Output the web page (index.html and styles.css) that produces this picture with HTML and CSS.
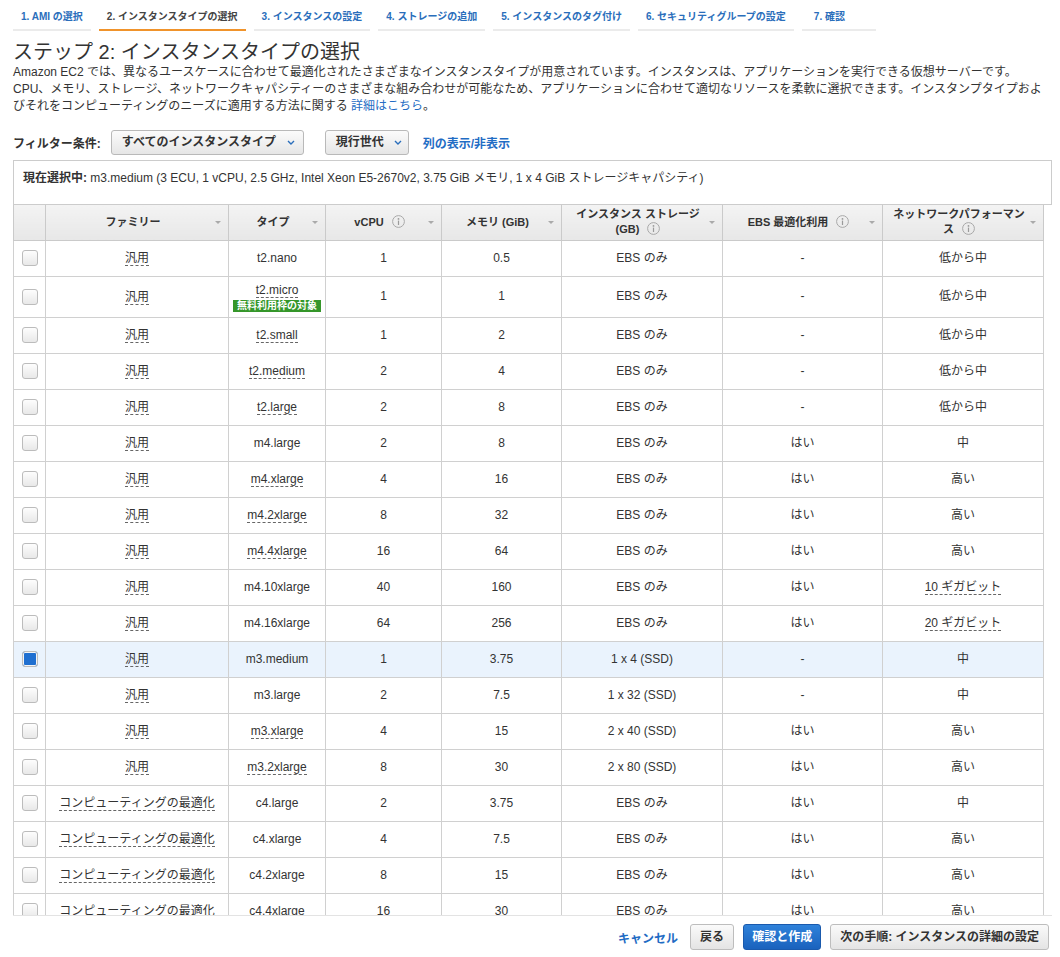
FILE: index.html
```html
<!DOCTYPE html>
<html lang="ja">
<head>
<meta charset="utf-8">
<title>ステップ 2: インスタンスタイプの選択</title>
<link rel="stylesheet" href="styles.css">
</head>
<body>
<div class="page">
  <nav class="tabs">
    <a class="tab">1. AMI の選択</a>
    <a class="tab active">2. インスタンスタイプの選択</a>
    <a class="tab">3. インスタンスの設定</a>
    <a class="tab">4. ストレージの追加</a>
    <a class="tab">5. インスタンスのタグ付け</a>
    <a class="tab">6. セキュリティグループの設定</a>
    <a class="tab tab-last">7. 確認</a>
  </nav>

  <h1 class="title">ステップ 2: インスタンスタイプの選択</h1>
  <p class="intro">Amazon EC2 では、異なるユースケースに合わせて最適化されたさまざまなインスタンスタイプが用意されています。インスタンスは、アプリケーションを実行できる仮想サーバーです。<br>CPU、メモリ、ストレージ、ネットワークキャパシティーのさまざまな組み合わせが可能なため、アプリケーションに合わせて適切なリソースを柔軟に選択できます。インスタンプタイプおよ<br>びそれをコンピューティングのニーズに適用する方法に関する <a class="link">詳細はこちら</a>。</p>

  <div class="filters">
    <span class="filter-label">フィルター条件:</span>
    <div class="select select-wide"><span>すべてのインスタンスタイプ</span><svg class="chev" width="8" height="5" viewBox="0 0 8 5"><path d="M1 1l3 3 3-3" fill="none" stroke="#2a6ebb" stroke-width="1.4"/></svg></div>
    <div class="select select-narrow"><span>現行世代</span><svg class="chev" width="8" height="5" viewBox="0 0 8 5"><path d="M1 1l3 3 3-3" fill="none" stroke="#2a6ebb" stroke-width="1.4"/></svg></div>
    <a class="link bold-link">列の表示/非表示</a>
  </div>

  <div class="current"><b>現在選択中:</b> m3.medium (3 ECU, 1 vCPU, 2.5 GHz, Intel Xeon E5-2670v2, 3.75 GiB メモリ, 1 x 4 GiB ストレージキャパシティ)</div>

  <div class="table-wrap">
    <table class="grid">
      <colgroup>
        <col class="c-check"><col class="c-family"><col class="c-type"><col class="c-vcpu"><col class="c-mem"><col class="c-storage"><col class="c-ebs"><col class="c-net">
      </colgroup>
      <thead>
        <tr>
          <th></th>
          <th>ファミリー<i class="caret"></i></th>
          <th>タイプ<i class="caret"></i></th>
          <th>vCPU<svg class="info" width="13" height="13" viewBox="0 0 13 13"><circle cx="6.5" cy="6.5" r="5.9" fill="none" stroke="#a8a8a8"/><circle cx="6.5" cy="3.9" r="0.9" fill="#9a9a9a"/><rect x="5.9" y="5.6" width="1.2" height="4.4" fill="#9a9a9a"/></svg><i class="caret"></i></th>
          <th>メモリ (GiB)<i class="caret"></i></th>
          <th>インスタンス ストレージ (GB)<svg class="info" width="13" height="13" viewBox="0 0 13 13"><circle cx="6.5" cy="6.5" r="5.9" fill="none" stroke="#a8a8a8"/><circle cx="6.5" cy="3.9" r="0.9" fill="#9a9a9a"/><rect x="5.9" y="5.6" width="1.2" height="4.4" fill="#9a9a9a"/></svg><i class="caret"></i></th>
          <th>EBS 最適化利用<svg class="info" width="13" height="13" viewBox="0 0 13 13"><circle cx="6.5" cy="6.5" r="5.9" fill="none" stroke="#a8a8a8"/><circle cx="6.5" cy="3.9" r="0.9" fill="#9a9a9a"/><rect x="5.9" y="5.6" width="1.2" height="4.4" fill="#9a9a9a"/></svg><i class="caret"></i></th>
          <th>ネットワークパフォーマンス<svg class="info" width="13" height="13" viewBox="0 0 13 13"><circle cx="6.5" cy="6.5" r="5.9" fill="none" stroke="#a8a8a8"/><circle cx="6.5" cy="3.9" r="0.9" fill="#9a9a9a"/><rect x="5.9" y="5.6" width="1.2" height="4.4" fill="#9a9a9a"/></svg><i class="caret"></i></th>
        </tr>
      </thead>
      <tbody>
        <tr><td><span class="cb"></span></td><td><span class="u">汎用</span></td><td>t2.nano</td><td>1</td><td>0.5</td><td>EBS のみ</td><td>-</td><td>低から中</td></tr>
        <tr class="tall"><td><span class="cb"></span></td><td><span class="u">汎用</span></td><td><span class="u">t2.micro</span><br><span class="badge">無料利用枠の対象</span></td><td>1</td><td>1</td><td>EBS のみ</td><td>-</td><td>低から中</td></tr>
        <tr><td><span class="cb"></span></td><td><span class="u">汎用</span></td><td><span class="u">t2.small</span></td><td>1</td><td>2</td><td>EBS のみ</td><td>-</td><td>低から中</td></tr>
        <tr><td><span class="cb"></span></td><td><span class="u">汎用</span></td><td><span class="u">t2.medium</span></td><td>2</td><td>4</td><td>EBS のみ</td><td>-</td><td>低から中</td></tr>
        <tr><td><span class="cb"></span></td><td><span class="u">汎用</span></td><td><span class="u">t2.large</span></td><td>2</td><td>8</td><td>EBS のみ</td><td>-</td><td>低から中</td></tr>
        <tr><td><span class="cb"></span></td><td><span class="u">汎用</span></td><td>m4.large</td><td>2</td><td>8</td><td>EBS のみ</td><td>はい</td><td>中</td></tr>
        <tr><td><span class="cb"></span></td><td><span class="u">汎用</span></td><td><span class="u">m4.xlarge</span></td><td>4</td><td>16</td><td>EBS のみ</td><td>はい</td><td>高い</td></tr>
        <tr><td><span class="cb"></span></td><td><span class="u">汎用</span></td><td><span class="u">m4.2xlarge</span></td><td>8</td><td>32</td><td>EBS のみ</td><td>はい</td><td>高い</td></tr>
        <tr><td><span class="cb"></span></td><td><span class="u">汎用</span></td><td><span class="u">m4.4xlarge</span></td><td>16</td><td>64</td><td>EBS のみ</td><td>はい</td><td>高い</td></tr>
        <tr><td><span class="cb"></span></td><td><span class="u">汎用</span></td><td>m4.10xlarge</td><td>40</td><td>160</td><td>EBS のみ</td><td>はい</td><td><span class="u">10 ギガビット</span></td></tr>
        <tr><td><span class="cb"></span></td><td><span class="u">汎用</span></td><td>m4.16xlarge</td><td>64</td><td>256</td><td>EBS のみ</td><td>はい</td><td><span class="u">20 ギガビット</span></td></tr>
        <tr class="selected"><td><span class="cb checked"></span></td><td><span class="u">汎用</span></td><td>m3.medium</td><td>1</td><td>3.75</td><td>1 x 4 (SSD)</td><td>-</td><td>中</td></tr>
        <tr><td><span class="cb"></span></td><td><span class="u">汎用</span></td><td>m3.large</td><td>2</td><td>7.5</td><td>1 x 32 (SSD)</td><td>-</td><td>中</td></tr>
        <tr><td><span class="cb"></span></td><td><span class="u">汎用</span></td><td><span class="u">m3.xlarge</span></td><td>4</td><td>15</td><td>2 x 40 (SSD)</td><td>はい</td><td>高い</td></tr>
        <tr><td><span class="cb"></span></td><td><span class="u">汎用</span></td><td><span class="u">m3.2xlarge</span></td><td>8</td><td>30</td><td>2 x 80 (SSD)</td><td>はい</td><td>高い</td></tr>
        <tr><td><span class="cb"></span></td><td><span class="u">コンピューティングの最適化</span></td><td>c4.large</td><td>2</td><td>3.75</td><td>EBS のみ</td><td>はい</td><td>中</td></tr>
        <tr><td><span class="cb"></span></td><td><span class="u">コンピューティングの最適化</span></td><td>c4.xlarge</td><td>4</td><td>7.5</td><td>EBS のみ</td><td>はい</td><td>高い</td></tr>
        <tr><td><span class="cb"></span></td><td><span class="u">コンピューティングの最適化</span></td><td>c4.2xlarge</td><td>8</td><td>15</td><td>EBS のみ</td><td>はい</td><td>高い</td></tr>
        <tr><td><span class="cb"></span></td><td><span class="u">コンピューティングの最適化</span></td><td>c4.4xlarge</td><td>16</td><td>30</td><td>EBS のみ</td><td>はい</td><td>高い</td></tr>
      </tbody>
    </table>
  </div>

  <div class="footer">
    <a class="link cancel">キャンセル</a>
    <button class="btn">戻る</button>
    <button class="btn primary">確認と作成</button>
    <button class="btn">次の手順: インスタンスの詳細の設定</button>
  </div>
</div>
</body>
</html>
```

FILE: styles.css
```css
* { box-sizing: border-box; }
html, body { margin: 0; padding: 0; background: #fff; }
body {
  font-family: "Liberation Sans", "Noto Sans CJK JP", sans-serif;
  font-size: 12px;
  color: #333;
}
.page { padding: 0 8px 0 13px; }

.tabs { display: flex; gap: 8px; padding-top: 7px; }
.tab {
  min-width: 74px;
  padding: 3px 8px 5px;
  border-bottom: 2px solid #ebebeb;
  font-size: 10px;
  line-height: 14px;
  font-weight: bold;
  color: #2a6ebb;
  white-space: nowrap;
}
.tab.active { color: #444; border-bottom-color: #f0932b; }
.tab-last { padding-left: 12px; }

.title {
  margin: 9px 0 0;
  font-size: 20px;
  line-height: 24px;
  font-weight: normal;
  color: #333;
}
.intro { margin: 0; line-height: 17px; font-size: 12px; }
.link { color: #1f6cc4; text-decoration: none; }

.filters { display: flex; align-items: center; margin-top: 15px; height: 25px; }
.filter-label { font-weight: bold; margin-right: 10px; }
.select {
  height: 25px;
  border: 1px solid #b9b9b9;
  border-radius: 3px;
  background: linear-gradient(#fbfbfb, #e6e6e6);
  display: flex;
  align-items: center;
  justify-content: space-between;
  padding: 0 8px 0 10px;
  font-weight: bold;
  line-height: 15px;
}
.select-wide { width: 193px; }
.select-narrow { width: 84px; margin-left: 21px; padding-right: 6px; }
.chev { flex: none; }
.bold-link { font-weight: bold; margin-left: 14px; }

.current {
  margin-top: 5px;
  height: 45px;
  border: 1px solid #cccccc;
  padding: 10px 9px 0;
  line-height: 15px;
}

.table-wrap {
  height: 711px;
  overflow: hidden;
  border-bottom: 1px solid #e3e3e3;
  width: 1039px;
}
.grid {
  border-collapse: collapse;
  table-layout: fixed;
  width: 1031px;
}
.c-check { width: 32px; }
.c-family { width: 183px; }
.c-type { width: 97px; }
.c-vcpu { width: 116px; }
.c-mem { width: 120px; }
.c-storage { width: 161px; }
.c-ebs { width: 160px; }
.c-net { width: 161px; }

.grid th {
  position: relative;
  height: 35px;
  padding: 2px 16px 2px 8px;
  background: linear-gradient(#f3f3f3, #e7e7e7);
  border: 1px solid #cacaca;
  border-top: none;
  font-size: 11px;
  line-height: 15px;
  font-weight: bold;
  text-align: center;
  vertical-align: middle;
}
.info { vertical-align: -2px; margin-left: 8px; }
.caret {
  position: absolute;
  right: 7px;
  top: 50%;
  margin-top: -1px;
  width: 0;
  height: 0;
  border-left: 3px solid transparent;
  border-right: 3px solid transparent;
  border-top: 3px solid #aaaaaa;
}

.grid td {
  height: 36px;
  padding: 0 4px;
  border: 1px solid #d0d0d0;
  text-align: center;
  vertical-align: middle;
  line-height: 15px;
  white-space: nowrap;
}
.grid tr.tall td { height: 41px; }
.grid tr.tall td .u { margin-top: 2px; }
.grid tr.selected td { background: #eaf3fd; }

.u {
  display: inline-block;
  line-height: 14px;
  border-bottom: 1px dashed #666;
}
.badge {
  display: inline-block;
  margin-top: 1px;
  background: #35962a;
  color: #fff;
  font-size: 10px;
  line-height: 12px;
  padding: 0 4px;
  font-weight: bold;
}

.cb {
  display: inline-block;
  width: 16px;
  height: 16px;
  border: 1px solid #bcbcbc;
  border-radius: 3px;
  background: linear-gradient(#fdfdfd, #e8e8e8);
  vertical-align: middle;
}
.cb.checked {
  background: #1f6fd0;
  box-shadow: inset 0 0 0 1px #f4f4f4;
}

.footer {
  display: flex;
  justify-content: flex-end;
  align-items: center;
  margin-top: 8px;
  padding-right: 3px;
  gap: 9px;
}
.cancel { font-weight: bold; margin-right: 3px; }
.btn {
  height: 26px;
  padding: 0 9px;
  border: 1px solid #bdbdbd;
  border-radius: 3px;
  background: linear-gradient(#fafafa, #e4e4e4);
  font-family: "Liberation Sans", "Noto Sans CJK JP", sans-serif;
  font-size: 12px;
  font-weight: bold;
  color: #333;
  line-height: 15px;
}
.btn.primary {
  padding: 0 8px;
  background: linear-gradient(#2f82da, #1a62bd);
  border-color: #1a5aad;
  color: #fff;
}
```
